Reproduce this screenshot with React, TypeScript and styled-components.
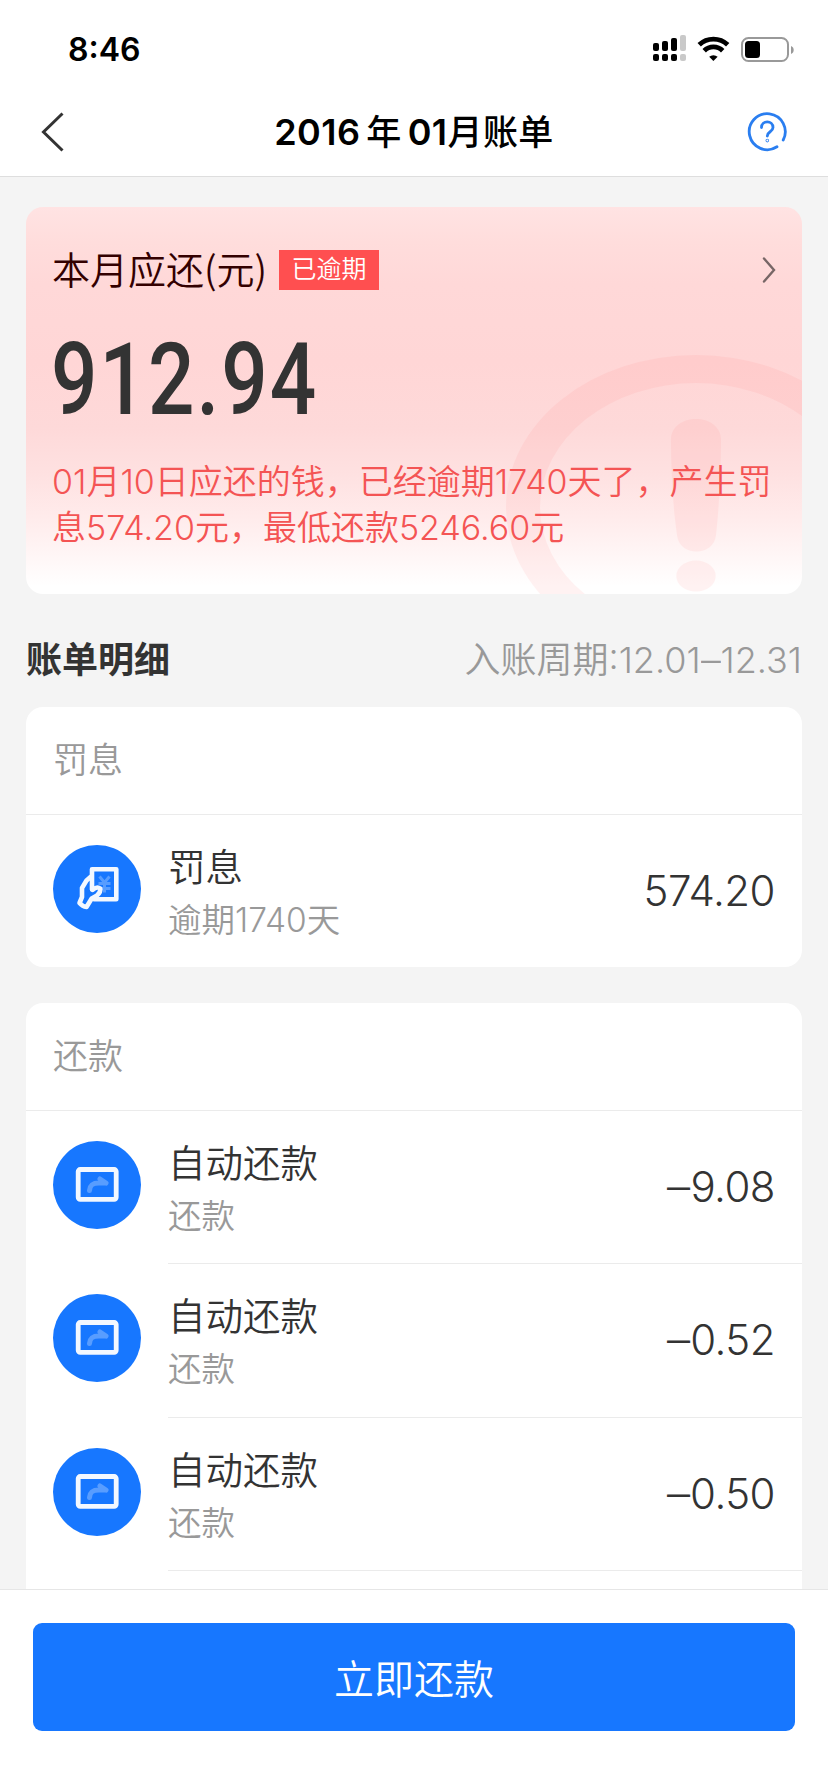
import React from 'react';
import styled, { createGlobalStyle } from 'styled-components';

const GlobalStyle = createGlobalStyle`
  * { box-sizing: border-box; }
  html, body { margin: 0; padding: 0; background: #f4f4f4; }
  body { font-family: Inter, "Noto Sans CJK SC", sans-serif; font-weight: 350; color: #333; }
`;

const Page = styled.div`
  display: flex;
  flex-direction: column;
  width: 828px;
  height: 1792px;
  overflow: hidden;
  background: #f4f4f4;
`;

const Header = styled.header`
  flex: none;
  height: 177px;
  background: #fff;
  border-bottom: 1px solid #dedede;
`;

const StatusBar = styled.div`
  display: flex;
  align-items: center;
  justify-content: space-between;
  height: 100px;
  padding: 0 32px 0 68px;
`;

const Clock = styled.div`
  font-size: 32px;
  font-weight: 600;
  line-height: 40px;
  color: #000;
`;

const NavBar = styled.nav`
  display: grid;
  grid-template-columns: 120px 1fr 120px;
  align-items: center;
  height: 64px;
`;

const BackButton = styled.button`
  display: flex;
  padding: 0 0 0 40px;
  border: 0;
  background: none;
`;

const HelpButton = styled(BackButton)`
  justify-content: flex-end;
  padding: 0 41px 0 0;
`;

const NavTitle = styled.h1`
  margin: 0;
  text-align: center;
  white-space: nowrap;
  font-size: 36px;
  font-weight: 600;
  line-height: 48px;
  letter-spacing: 0.4px;
  color: #000;
`;

const TitleHan = styled.span<{ $gap?: number }>`
  margin: 0 ${(p) => p.$gap ?? 0}px;
  font-size: 35px;
  font-weight: 500;
`;

const Content = styled.main`
  flex: 1;
  min-height: 0;
  display: flex;
  flex-direction: column;
  padding: 30px 26px 0;
`;

const SummaryCard = styled.section`
  position: relative;
  flex: none;
  height: 387px;
  padding: 40px 0 0 27px;
  border-radius: 17px;
  overflow: hidden;
  background: linear-gradient(
    180deg,
    #ffe3e3 0%, #ffdddc 9%, #ffd8d8 20%, #ffd6d6 40%, #fed9d9 57%,
    #fee1e1 69%, #ffebeb 80%, #fff6f6 90%, #ffffff 98%
  );
`;

const Watermark = styled.svg`
  position: absolute;
  inset: 0;
`;

const SummaryHead = styled.div`
  position: relative;
  display: flex;
  align-items: center;
  height: 46px;
  padding-right: 26px;
`;

const SummaryLabel = styled.div`
  width: 215px;
  margin-left: -1px;
  padding-bottom: 4px;
  white-space: nowrap;
  font-family: "Noto Sans CJK SC", sans-serif;
  font-size: 38px;
  line-height: 46px;
  color: #330000;
`;

const Tag = styled.span`
  width: 100px;
  height: 40px;
  margin: 0 auto 0 12px;
  background: #ff4f50;
  color: #fff;
  font-size: 25px;
  line-height: 38px;
  text-align: center;
`;

const Total = styled.div`
  position: relative;
  width: max-content;
  margin: 35px 0 0 -2px;
  font-family: Roboto, sans-serif;
  font-weight: 500;
  font-size: 101px;
  line-height: 104px;
  letter-spacing: 2.5px;
  transform: scaleX(0.81);
  transform-origin: 0 50%;
`;

const Notice = styled.p`
  position: relative;
  margin: 27px 0 0 -1px;
  font-size: 34px;
  line-height: 46px;
  color: #f45454;
  white-space: nowrap;
`;

const SectionHead = styled.div`
  flex: none;
  display: flex;
  align-items: center;
  justify-content: space-between;
  height: 113px;
  padding-top: 18px;
`;

const SectionTitle = styled.h2`
  margin: 0;
  font-size: 36px;
  font-weight: 600;
  line-height: 50px;
`;

const Cycle = styled.div`
  font-size: 36px;
  line-height: 50px;
  color: #999;
`;

const Dash = styled.span<{ $gap: number }>`
  display: inline-block;
  transform: scaleX(1.1);
  margin: 0 ${(p) => p.$gap}px;
`;

const Card = styled.section<{ $fill?: boolean }>`
  flex: ${(p) => (p.$fill ? '1 0 auto' : 'none')};
  width: 776px;
  margin-bottom: ${(p) => (p.$fill ? 0 : 36)}px;
  border-radius: ${(p) => (p.$fill ? '17px 17px 0 0' : '17px')};
  background: #fff;
  overflow: hidden;
`;

const CardHead = styled.div`
  height: 108px;
  padding: 28px 27px 0;
  border-bottom: 1px solid #ebebeb;
  font-size: 35px;
  line-height: 50px;
  color: #999;
`;

const Row = styled.div`
  display: flex;
  height: 153.33px;

  &:last-child:nth-child(2) {
    height: 152px;
  }
`;

const Badge = styled.svg`
  flex: none;
  margin: 30px 27px 0 27px;
`;

const RowBody = styled.div<{ $divided: boolean }>`
  flex: 1;
  display: flex;
  align-items: flex-start;
  justify-content: space-between;
  padding-right: 27px;
  border-bottom: 1px solid ${(p) => (p.$divided ? '#ebebeb' : 'transparent')};
`;

const RowText = styled.div`
  padding-top: 27px;
`;

const RowTitle = styled.div`
  font-size: 37.5px;
  line-height: 52px;
`;

const RowSub = styled.div`
  font-size: 33.5px;
  line-height: 52px;
  color: #999;
`;

const Amount = styled.div`
  padding-top: 50px;
  font-size: 42px;
  line-height: 52px;
  letter-spacing: -0.012em;
`;

const Footer = styled.footer`
  flex: none;
  height: 203px;
  padding: 33px;
  border-top: 1px solid #e6e6e6;
  background: #fff;
`;

const PayButton = styled.button`
  display: block;
  width: 762px;
  height: 108px;
  border: 0;
  border-radius: 9px;
  background: #1777ff;
  color: #fff;
  font: 350 40px/108px "Noto Sans CJK SC", sans-serif;
  padding: 0 0 3px;
`;

function StatusIcons() {
  const heights = [8, 10, 13, 16];
  return (
    <svg width="144" height="30" viewBox="0 0 144 30">
      {heights.map((h, i) => (
        <g key={h} fill={i === 3 ? '#c9c9c9' : '#000'}>
          <rect x={1 + i * 9} y={16 - h} width="6" height={h} rx="2" />
          <rect x={1 + i * 9} y="19" width="6" height="7" rx="2" />
        </g>
      ))}
      <g fill="none" stroke="#000" strokeWidth="4.8">
        <path d="M47.2 9.8a20.5 20.5 0 0 1 28.5 0" />
        <path d="M52.2 15.8a13 13 0 0 1 18.5 0" />
      </g>
      <path d="M61.4 26l-4.2-4.2a6.2 6.2 0 0 1 8.4 0z" fill="#000" />
      <rect x="90" y="3" width="46" height="23" rx="6.5" fill="none" stroke="#999" strokeWidth="2" />
      <rect x="93" y="6" width="15" height="17" rx="3.5" fill="#000" />
      <path d="M139 11v8c3.6-1.2 3.6-6.8 0-8z" fill="#999" />
    </svg>
  );
}

function BillIcon() {
  return (
    <Badge width="88" height="88" viewBox="0 0 88 88">
      <circle cx="44" cy="44" r="44" fill="#1777ff" />
      <path d="M46.5 31.5l5 6 5-6M51.5 37.5v10M45.5 38.5h12M45.5 43.5h12" fill="none" stroke="#589dff" strokeWidth="3" />
      <g fill="none" stroke="#f3f8ff" strokeWidth="4.6" strokeLinejoin="round" strokeLinecap="round">
        <path d="M39 44.5V24.3H63.3V54.3H41" />
        <path d="M37.5 32L33.5 35.5L29 43V52L26.5 58Q29.5 61.5 33.5 62L38.7 53.5L44 50.5Q48 47 47.2 43.5Q44 41 39.7 44.8" />
      </g>
    </Badge>
  );
}

function TransferIcon() {
  return (
    <Badge width="88" height="88" viewBox="0 0 88 88">
      <circle cx="44" cy="44" r="44" fill="#1777ff" />
      <rect x="25.2" y="28.5" width="38" height="29.8" rx="2" fill="none" stroke="#f3f8ff" strokeWidth="4.8" />
      <path d="M36.5 49.5C37 43.5 40 42 46 42h6M47 38l6 4" fill="none" stroke="#589dff" strokeWidth="5" strokeLinecap="round" />
    </Badge>
  );
}

const repayments = ['9.08', '0.52', '0.50'];

export default function App() {
  return (
    <Page>
      <GlobalStyle />
      <Header>
        <StatusBar>
          <Clock>8:46</Clock>
          <StatusIcons />
        </StatusBar>
        <NavBar>
          <BackButton>
            <svg width="24" height="40" viewBox="0 0 24 40">
              <path d="M22.5 1.5L3.5 20L22.5 38.5" fill="none" stroke="#333" strokeWidth="3" />
            </svg>
          </BackButton>
          <NavTitle>2016<TitleHan $gap={6}>年</TitleHan>01<TitleHan>月账单</TitleHan></NavTitle>
          <HelpButton>
            <svg width="40" height="40" viewBox="0 0 40 40" fill="none" stroke="#2a7ef0" strokeWidth="2.8" strokeLinecap="round">
              <path d="M30 34.8A18 18 0 1 1 36.2 28" />
              <path d="M14.5 15.5C14.5 8 26 8 26 15.5C26 20 20.3 19.5 20.3 24" />
              <circle cx="20.3" cy="28.6" r="0.4" />
            </svg>
          </HelpButton>
        </NavBar>
      </Header>
      <Content>
        <SummaryCard>
          <Watermark width="776" height="387" viewBox="0 0 776 387">
            <g fill="#ff4f50" opacity="0.065">
              <path fillRule="evenodd" d="M480 300a190 152 0 1 0 380 0a190 152 0 1 0-380 0zM514 300a156 124 0 1 0 312 0a156 124 0 1 0-312 0z" />
              <path d="M645 233C645 205 695 205 695 233C695 265 693 300 690 328C688 350 653 350 651 328C647 300 645 265 645 233z" />
              <ellipse cx="670" cy="369" rx="19.7" ry="15.5" />
            </g>
          </Watermark>
          <SummaryHead>
            <SummaryLabel>本月应还(元)</SummaryLabel>
            <Tag>已逾期</Tag>
            <svg width="14" height="28" viewBox="0 0 14 28">
              <path d="M2 2.5L12 14L2 25.5" fill="none" stroke="#766" strokeWidth="2.4" strokeLinecap="round" />
            </svg>
          </SummaryHead>
          <Total>912.94</Total>
          <Notice>
            01月10日应还的钱，已经逾期1740天了，产生罚<br />
            息574.20元，最低还款5246.60元
          </Notice>
        </SummaryCard>
        <SectionHead>
          <SectionTitle>账单明细</SectionTitle>
          <Cycle>入账周期:12.01<Dash $gap={1}>–</Dash>12.31</Cycle>
        </SectionHead>
        <Card>
          <CardHead>罚息</CardHead>
          <Row>
            <BillIcon />
            <RowBody $divided={false}>
              <RowText>
                <RowTitle>罚息</RowTitle>
                <RowSub>逾期1740天</RowSub>
              </RowText>
              <Amount>574.20</Amount>
            </RowBody>
          </Row>
        </Card>
        <Card $fill>
          <CardHead>还款</CardHead>
          {repayments.map((amount, i) => (
            <Row key={i}>
              <TransferIcon />
              <RowBody $divided>
                <RowText>
                  <RowTitle>自动还款</RowTitle>
                  <RowSub>还款</RowSub>
                </RowText>
                <Amount><Dash $gap={2}>–</Dash>{amount}</Amount>
              </RowBody>
            </Row>
          ))}
        </Card>
      </Content>
      <Footer>
        <PayButton>立即还款</PayButton>
      </Footer>
    </Page>
  );
}
